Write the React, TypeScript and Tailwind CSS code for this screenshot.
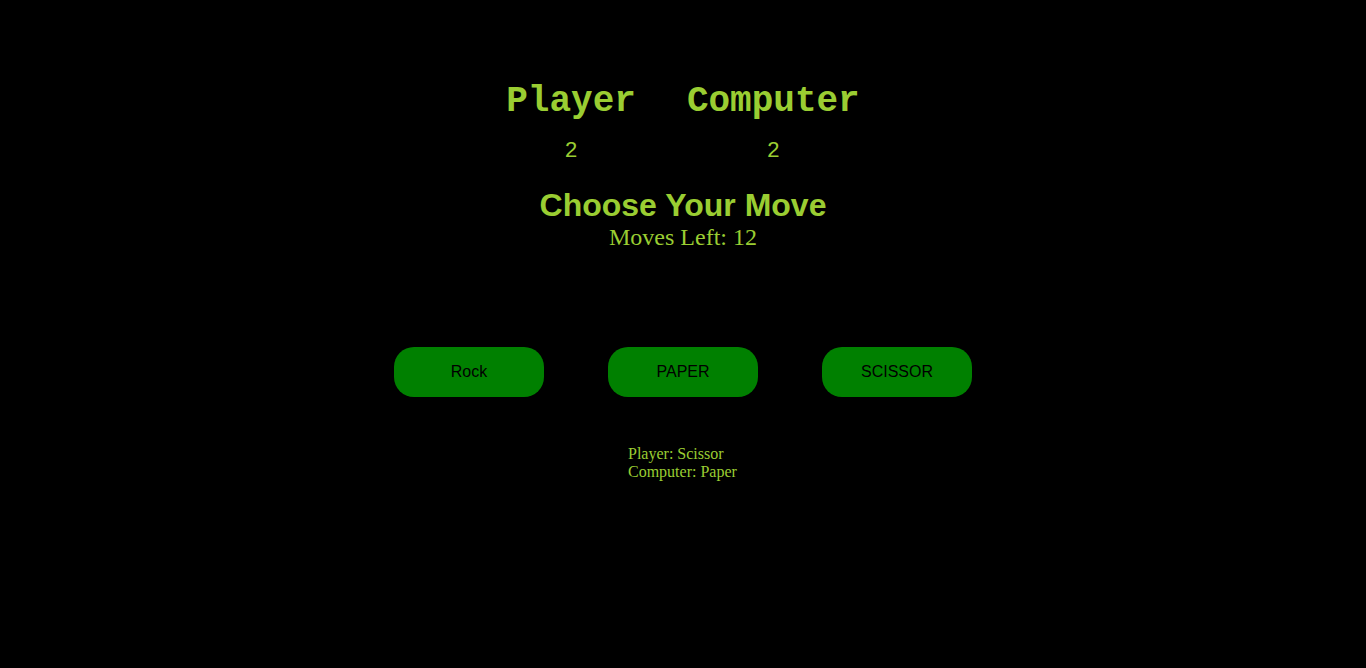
import React from "react";

export default function App() {
  const c = "text-[#9acd32]";
  return (
    <div className="min-h-[668px] w-full bg-black flex flex-col items-center">
      <div className="flex gap-[51px] mt-[81px]">
        <div className="flex flex-col items-center">
          <div className={`${c} font-bold text-[36px] leading-[42px] font-['Liberation_Mono',monospace]`}>Player</div>
          <div className={`${c} text-[22px] leading-[26px] mt-[16px] font-['Liberation_Mono',monospace]`}>2</div>
        </div>
        <div className="flex flex-col items-center">
          <div className={`${c} font-bold text-[36px] leading-[42px] font-['Liberation_Mono',monospace]`}>Computer</div>
          <div className={`${c} text-[22px] leading-[26px] mt-[16px] font-['Liberation_Mono',monospace]`}>2</div>
        </div>
      </div>
      <div className={`${c} font-bold text-[32px] leading-[37px] mt-[22px] font-['Liberation_Sans',sans-serif]`}>Choose Your Move</div>
      <div className={`${c} text-[24px] leading-[27px] font-['Liberation_Serif',serif]`}>Moves Left: 12</div>
      <div className="flex gap-[64px] mt-[96px]">
        {["Rock", "PAPER", "SCISSOR"].map((t) => (
          <button key={t} className="w-[150px] h-[50px] rounded-[20px] bg-[#008000] text-black text-[16px] font-['Liberation_Sans',sans-serif]">
            {t}
          </button>
        ))}
      </div>
      <div className={`${c} mt-[48px] text-[16px] leading-[18px] font-['Liberation_Serif',serif] w-[110px]`}>
        <div>Player: Scissor</div>
        <div>Computer: Paper</div>
      </div>
    </div>
  );
}
